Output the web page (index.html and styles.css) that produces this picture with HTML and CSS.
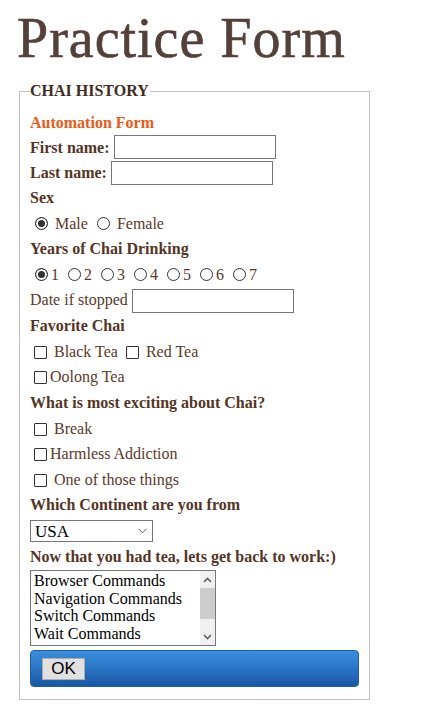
FILE: index.html
```html
<!DOCTYPE html>
<html lang="en">
<head>
<meta charset="utf-8">
<title>Practice Form</title>
<link rel="stylesheet" href="styles.css">
</head>
<body>
<div class="page">
  <h1 class="title">Practice Form</h1>
  <form class="form">
    <fieldset class="box">
      <legend class="legend">CHAI HISTORY</legend>
      <div class="row"><span class="heading orange">Automation Form</span></div>
      <div class="row"><span class="heading">First name:</span><input class="text first" type="text"></div>
      <div class="row"><span class="heading">Last name:</span><input class="text last" type="text"></div>
      <div class="row tall"><span class="heading">Sex</span></div>
      <div class="row">
        <input class="radio" type="radio" name="sex" checked><span class="lbl sp">Male</span>
        <input class="radio sp2" type="radio" name="sex"><span class="lbl sp">Female</span>
      </div>
      <div class="row tall"><span class="heading">Years of Chai Drinking</span></div>
      <div class="row">
        <input class="radio" type="radio" name="yr" checked><span class="lbl">1</span>
        <input class="radio gap" type="radio" name="yr"><span class="lbl">2</span>
        <input class="radio gap" type="radio" name="yr"><span class="lbl">3</span>
        <input class="radio gap" type="radio" name="yr"><span class="lbl">4</span>
        <input class="radio gap" type="radio" name="yr"><span class="lbl">5</span>
        <input class="radio gap" type="radio" name="yr"><span class="lbl">6</span>
        <input class="radio gap" type="radio" name="yr"><span class="lbl">7</span>
      </div>
      <div class="row tall"><span class="lbl">Date if stopped</span><input class="text date" type="text"></div>
      <div class="row tall"><span class="heading">Favorite Chai</span></div>
      <div class="row">
        <input class="check" type="checkbox"><span class="lbl sp">Black Tea</span>
        <input class="check sp2" type="checkbox"><span class="lbl sp">Red Tea</span>
      </div>
      <div class="row tall"><input class="check" type="checkbox"><span class="lbl">Oolong Tea</span></div>
      <div class="row tall"><span class="heading">What is most exciting about Chai?</span></div>
      <div class="row"><input class="check" type="checkbox"><span class="lbl sp">Break</span></div>
      <div class="row tall"><input class="check" type="checkbox"><span class="lbl">Harmless Addiction</span></div>
      <div class="row"><input class="check" type="checkbox"><span class="lbl sp">One of those things</span></div>
      <div class="row tall"><span class="heading">Which Continent are you from</span></div>
      <div class="row tall">
        <div class="select-wrap">
          <select class="select">
            <option>USA</option>
            <option>Europe</option>
            <option>Asia</option>
          </select>
          <svg class="chev" width="9" height="6" viewBox="0 0 9 6"><path d="M0.5 0.8 L4.5 4.8 L8.5 0.8" fill="none" stroke="#555" stroke-width="1"/></svg>
        </div>
      </div>
      <div class="row"><span class="heading">Now that you had tea, lets get back to work:)</span></div>
      <div class="listbox" role="listbox">
        <ul class="items">
          <li>Browser Commands</li>
          <li>Navigation Commands</li>
          <li>Switch Commands</li>
          <li>Wait Commands</li>
        </ul>
        <div class="scrollbar">
          <div class="sb-btn">
            <svg width="9" height="6" viewBox="0 0 9 6"><path d="M1 5 L4.5 1.5 L8 5" fill="none" stroke="#606060" stroke-width="1.6"/></svg>
          </div>
          <div class="sb-track"><div class="sb-thumb"></div></div>
          <div class="sb-btn">
            <svg width="9" height="6" viewBox="0 0 9 6"><path d="M1 1 L4.5 4.5 L8 1" fill="none" stroke="#606060" stroke-width="1.6"/></svg>
          </div>
        </div>
      </div>
      <div class="bar">
        <button class="ok" type="button">OK</button>
      </div>
    </fieldset>
  </form>
</div>
</body>
</html>
```
FILE: styles.css
```css
* { box-sizing: border-box; }
html, body { margin: 0; padding: 0; background: #fff; }
body {
  font-family: "Liberation Serif", "Times New Roman", serif;
  font-size: 16px;
  color: #5a3a2a;
}
.page { padding: 6px 0 0 17px; }
.title {
  margin: 0;
  font-family: "Liberation Serif", "Times New Roman", serif;
  font-weight: normal;
  font-size: 56px;
  line-height: 64px;
  height: 64px;
  letter-spacing: 1px;
  color: #54403a;
  -webkit-text-stroke: 0.6px #54403a;
}
.form { margin: 12px 0 0 2px; }
.box {
  width: 351px;
  margin: 0;
  padding: 10px 10px 12px 10px;
  border: 1px solid #c3c3c3;
}
.legend {
  padding: 0 1px 0 0;
  font-weight: bold;
  font-size: 16px;
  line-height: 18px;
  color: #3f2c22;
}
.row {
  display: flex;
  align-items: center;
  height: 25px;
  white-space: nowrap;
}
.row.tall { height: 26px; }
.heading, .lbl { line-height: 18px; }
.heading { font-weight: bold; color: #553525; }
.orange { color: #ec5a16; }
.lbl { color: #5a3a2a; }
.sp { margin-left: 4px; }
.text {
  display: block;
  width: 162px;
  height: 24px;
  margin: 0 0 0 4px;
  padding: 0;
  border: 1px solid #777;
  background: #fff;
  font: inherit;
}
.first { margin-top: -2px; }
.date { margin-top: 1px; }
.radio {
  appearance: none;
  -webkit-appearance: none;
  width: 13px;
  height: 13px;
  margin: 0 3px 0 5px;
  border: 1px solid #333;
  border-radius: 50%;
  background: #fff;
  flex: none;
}
.radio:checked {
  background: #333;
  box-shadow: inset 0 0 0 2px #fff;
}
.radio.gap { margin-left: 9px; }
.radio.sp2 { margin-left: 9px; }
.check {
  appearance: none;
  -webkit-appearance: none;
  width: 13px;
  height: 13px;
  margin: 1px 3px 0 4px;
  border: 1px solid #333;
  border-radius: 1px;
  background: #fff;
  flex: none;
}
.check.sp2 { margin-left: 8px; }
.select-wrap {
  position: relative;
  width: 123px;
  height: 22px;
}
.select {
  appearance: none;
  -webkit-appearance: none;
  display: block;
  width: 123px;
  height: 22px;
  margin: 0;
  padding: 0 0 0 4px;
  border: 1px solid #777;
  border-radius: 0;
  background: #fff;
  font-family: "Liberation Serif", "Times New Roman", serif;
  font-size: 17px;
  color: #000;
}
.chev {
  position: absolute;
  right: 6px;
  top: 8px;
  pointer-events: none;
}
.listbox {
  display: flex;
  width: 186px;
  height: 76px;
  margin-top: 1px;
  border: 1px solid #777;
  background: #fff;
  overflow: hidden;
}
.items {
  flex: 1;
  margin: 0;
  padding: 1px 0 0 3px;
  list-style: none;
  font-size: 16px;
  line-height: 17.7px;
  color: #000;
  white-space: nowrap;
}
.scrollbar {
  display: flex;
  flex-direction: column;
  width: 15px;
  background: #f0f0f0;
}
.sb-btn {
  height: 17px;
  display: flex;
  align-items: center;
  justify-content: center;
}
.sb-track { flex: 1; }
.sb-thumb {
  height: 31px;
  background: #cdcdcd;
}
.bar {
  margin-top: 4px;
  height: 37px;
  padding: 7px 0 0 11px;
  border: 1px solid #1f5fa6;
  border-radius: 4px;
  background: linear-gradient(to bottom, #3b8fdc 0%, #2a74c4 50%, #1857a3 100%);
}
.ok {
  display: block;
  width: 43px;
  height: 22px;
  margin: 0;
  padding: 0;
  border: 1px solid #adadad;
  border-radius: 0;
  background: #e1e1e1;
  font-family: "Liberation Sans", Arial, sans-serif;
  font-size: 17px;
  line-height: 20px;
  color: #000;
}
```
